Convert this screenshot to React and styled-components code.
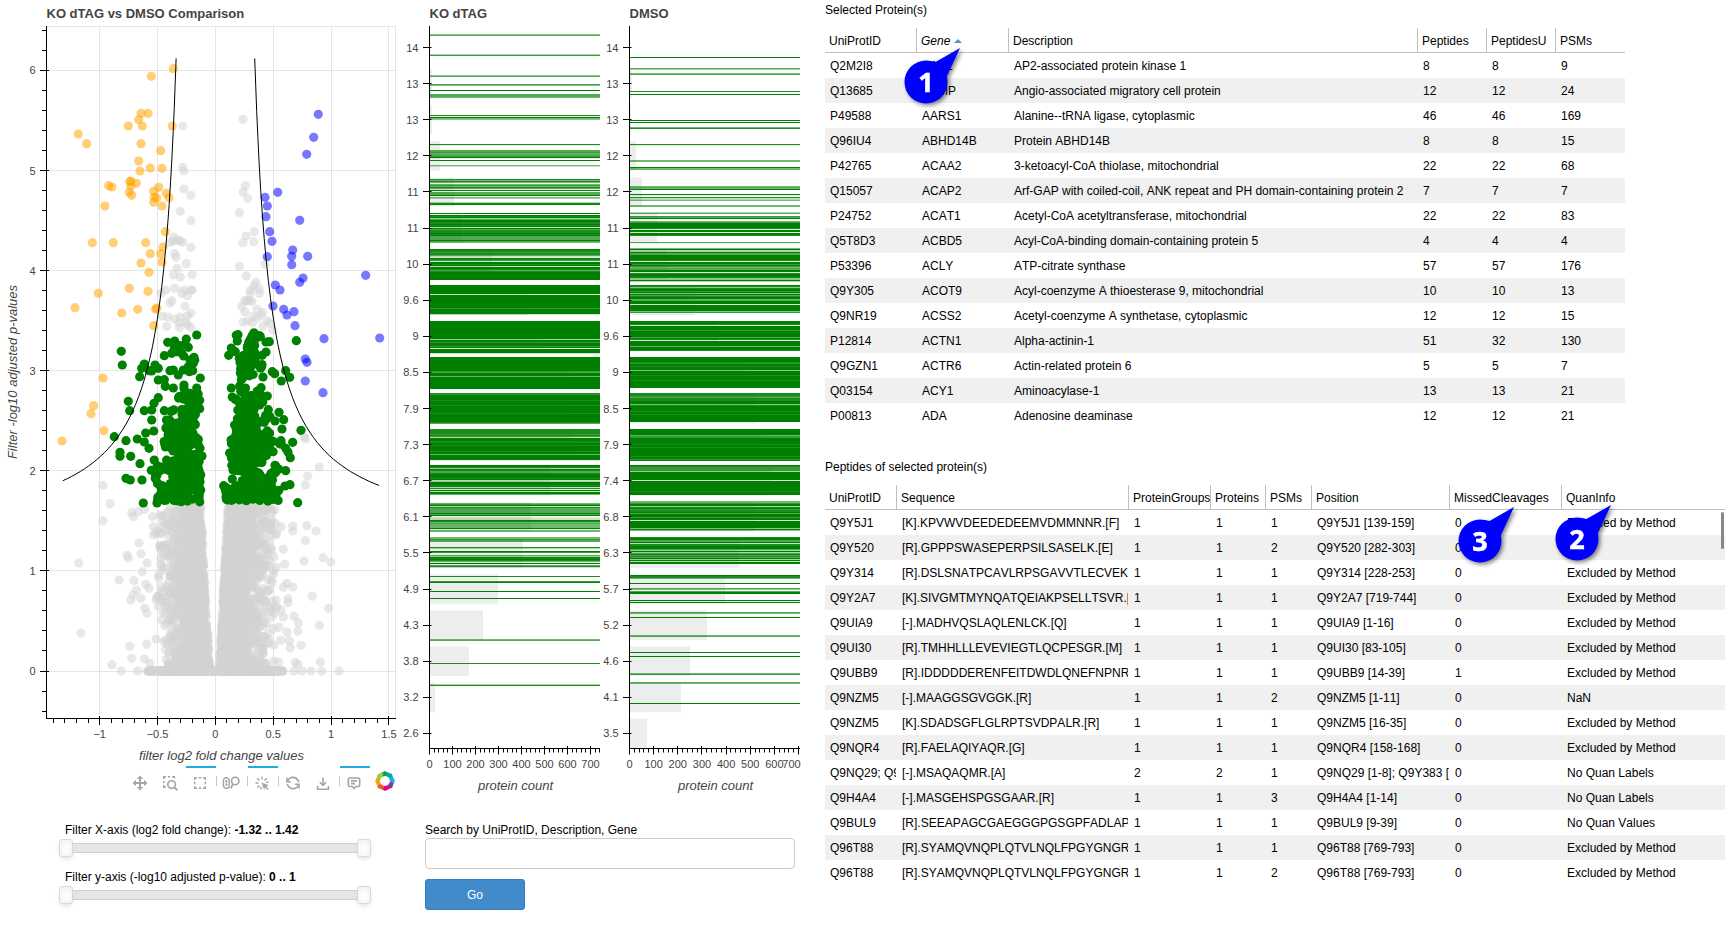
import React from "react";
import styled, { createGlobalStyle, css } from "styled-components";

const GlobalStyle = createGlobalStyle`
  * { box-sizing: border-box; }
  body {
    margin: 0;
    background: #fff;
    color: #000;
    font: 12px "Liberation Sans", Arial, sans-serif;
    overflow: hidden;
  }
`;

/* ---------- layout ---------- */

const Page = styled.main`
  display: flex;
  width: 1728px;
  height: 942px;
`;
const PlotsPane = styled.section`
  width: 825px;
  display: flex;
  flex-direction: column;
`;
const FigureRow = styled.div`
  display: flex;
  height: 812px;
`;
const Figure = styled.div`
  width: ${(p) => p.$w}px;
  display: flex;
  flex-direction: column;
`;
const Plot = styled.svg`
  display: block;
  overflow: visible;
  flex: none;
  font-family: "Liberation Sans", Arial, sans-serif;
  fill: #444;
`;
const PlotTitle = styled.text`
  font-size: 13px;
  font-weight: bold;
`;
const TickLabel = styled.text`
  font-size: 11px;
  text-anchor: ${(p) => p.$anchor || "middle"};
`;
const AxisLabel = styled.text`
  font-size: 13px;
  font-style: italic;
  text-anchor: middle;
`;

/* ---------- toolbar ---------- */

const Toolbar = styled.div`
  display: flex;
  align-items: flex-start;
  padding-left: 126px;
  height: 34px;
`;
const ToolButton = styled.div`
  width: 30px;
  height: 32px;
  flex: none;
  display: flex;
  justify-content: center;
  padding: 7px 2px 0 0;
  border-top: 2px solid ${(p) => (p.$active ? "#26aae1" : "transparent")};
`;
const Separator = styled.div`
  width: 1px;
  height: 10px;
  margin-top: 10px;
  flex: none;
  background: #c4c6c8;
`;
const ToolIcon = styled.svg`
  width: 16px;
  height: 16px;
  fill: none;
  stroke: #a1a6a9;
  stroke-width: 1.4;
  overflow: visible;
`;
const Logo = styled.svg`
  width: 20px;
  height: 20px;
  margin: 5px 0 0 5px;
`;

/* ---------- controls ---------- */

const ControlRow = styled.div`
  display: flex;
  padding-top: 11px;
`;
const SliderColumn = styled.div`
  width: 425px;
  padding-left: 65px;
  display: flex;
  flex-direction: column;
  gap: 15px;
`;
const SliderBox = styled.div`
  height: 32px;
`;
const SliderTitle = styled.div`
  line-height: 15px;
  height: 16px;
`;
const SliderTrack = styled.div`
  display: flex;
  justify-content: space-between;
  align-items: center;
  width: 300px;
  height: 10px;
  margin: 4px 0 0 0;
  background: #e6e6e6;
  border: 1px solid #d0d0d0;
  border-width: 1px 0;
`;
const Handle = styled.div`
  width: 14px;
  height: 18px;
  margin: 0 -6px;
  flex: none;
  background: #fff;
  border: 1px solid #d9d9d9;
  border-radius: 3px;
  box-shadow: inset 0 0 1px #fff, inset 0 1px 7px #ebebeb, 0 3px 6px -3px #bbb;
`;
const SearchColumn = styled.div`
  display: flex;
  flex-direction: column;
`;
const SearchLabel = styled.label`
  line-height: 15px;
  height: 15px;
`;
const SearchInput = styled.input`
  width: 370px;
  height: 31px;
  border: 1px solid #ccc;
  border-radius: 4px;
  outline: none;
`;
const GoButton = styled.button`
  width: 100px;
  height: 31px;
  margin-top: 10px;
  border: 1px solid #357ebd;
  border-radius: 3px;
  background: #428bca;
  color: #fff;
  font: 12px "Liberation Sans", Arial, sans-serif;
`;

/* ---------- tables ---------- */

const TablesPane = styled.section`
  width: 903px;
  position: relative;
`;
const TableBlock = styled.div`
  height: 457px;
`;
const TableTitle = styled.div`
  height: 28px;
  padding-top: 2px;
  line-height: 16px;
`;
const Table = styled.div`
  width: ${(p) => p.$w}px;
  display: flex;
  flex-direction: column;
`;
const rowGrid = css`
  display: grid;
  grid-template-columns: ${(p) => p.$cols.map((c) => c + "px").join(" ")};
`;
const HeaderRow = styled.div`
  ${rowGrid}
  height: 25px;
  border-bottom: 1px solid #c0c0c0;
`;
const HeaderCell = styled.div`
  display: flex;
  align-items: center;
  gap: 4px;
  padding: 2px 0 0 4px;
  line-height: 15px;
  white-space: nowrap;
  overflow: hidden;
  border-right: 1px solid #c0c0c0;
  font-style: ${(p) => (p.$sorted ? "italic" : "normal")};
  &:last-child { border-right: 0; }
`;
const SortArrow = styled.span`
  border: 4px solid transparent;
  border-top: 0;
  border-bottom: 4px solid #6190cd;
`;
const Row = styled.div`
  ${rowGrid}
  height: 25px;
  line-height: 27px;
  background: ${(p) => (p.$odd ? "#f0f0f0" : "#fff")};
`;
const Cell = styled.div`
  height: 25px;
  margin-right: 1px;
  padding-left: 5px;
  white-space: nowrap;
  overflow: hidden;
  font-kerning: none;
`;
const ScrollThumb = styled.div`
  position: absolute;
  left: 896px;
  top: 512px;
  width: 3px;
  height: 37px;
  border-radius: 2px;
  background: #888;
`;
const Callout = styled.svg`
  position: absolute;
  left: ${(p) => p.$x - 24}px;
  top: ${(p) => p.$y - 38}px;
  width: 70px;
  height: 70px;
  overflow: visible;
  filter: drop-shadow(2px 2px 2px rgba(0, 0, 0, 0.5));
  text {
    font: bold 27px "Open Sans", "Noto Sans", sans-serif;
    fill: #fff;
    stroke: #fff;
    stroke-width: 0.5px;
    text-anchor: middle;
  }
`;

/* ---------- volcano plot data ---------- */

const X0 = 215.4, XS = 115.7, Y0 = 671, YS = 100.1;
const sx = (v) => X0 + v * XS;
const sy = (v) => Y0 - v * YS;
const snap = (v) => Math.floor(v) + 0.5;

const randomSource = (seed) => () => {
  seed = (seed + 0x6d2b79f5) | 0;
  let t = Math.imul(seed ^ (seed >>> 15), 1 | seed);
  t = (t + Math.imul(t ^ (t >>> 7), 61 | t)) ^ t;
  return ((t ^ (t >>> 14)) >>> 0) / 4294967296;
};
const rnd = randomSource(42);
const gauss = () => Math.sqrt(-2 * Math.log(rnd() + 1e-9)) * Math.cos(2 * Math.PI * rnd());

// Point lists are stored in thirds of a pixel.
const parse = (s) => s.trim().split(/\s+/).map((p) => p.split(",").map((n) => Number(n) / 3));

const ORANGE = parse(`520,206 454,229 423,340 444,340 416,359 385,378 427,378 517,378 235,402 260,431 423,431
482,452 416,483 451,504 486,505 420,513 390,545 392,543 409,550 326,557 336,561 392,558 476,562 388,577 461,574
499,580 395,586 507,593 463,592 470,594 461,607 486,618 315,618 496,695 277,728 340,728 437,728 489,741 451,761
482,761 486,786 423,789 447,817 388,865 444,874 295,880 225,923 365,939 413,928 470,924 467,928 461,977
309,1134 281,1217 273,1241 312,1292 186,1323`);
const BLUE = parse(`955,343 941,412 920,463 833,577 795,592 802,618 798,650 899,661 809,695 816,724 878,750 802,770
875,769 923,769 875,794 1097,826 909,834 899,847 826,855 840,870 819,918 851,928 882,935 861,945 885,977 972,1016
1139,1014 916,1077 921,1087 916,1143 969,1178`);
const GREEN_FIXED = parse(`364,1054 367,1095 385,1204 389,1232 433,1232 343,1310 378,1322 412,1317 437,1299 461,1293
433,1326 447,1345 360,1357 360,1369 392,1369 420,1391 378,1435 391,1440 426,1440 430,1509 471,1509 454,1411
493,1139 475,1193 493,1232 455,1230 455,1260 462,1210 433,1092 425,1105 419,1130 465,1095 475,1105 455,1113 448,1112
475,1140 889,1022 590,1005 559,1017 524,1023 503,1027 540,1037 523,1043 555,1033 565,1042 493,1067 515,1060 530,1055
545,1060 551,1068 582,1072 584,1081 570,1080 510,1112 520,1110 535,1125 550,1110 565,1100 580,1090 568,1115 578,1112
601,1134 496,1159 520,1164 552,1155 552,1165 590,1164 570,1180 537,1190 555,1190 568,1197 599,1201 599,1226
709,1006 714,1004 712,1023 798,1026 808,1025 694,1044 686,1066 706,1055 718,1075 798,1056 817,1115 824,1121
857,1112 869,1132 844,1143 789,1131 694,1164 697,1191 837,1237 851,1259 846,1287 903,1291 878,1327 843,1322
857,1345 864,1356 871,1373 857,1412 836,1407 870,1454 855,1458 893,1508 805,1229 810,1250 802,1188 825,1263
671,1457 676,1468 685,1480 606,1368 602,1424 602,1470 600,1345 697,1437`);

// Dense areas of the selection: left, right, top, bottom, number of points.
const GREEN_ZONES = [
  [175, 205, 205, 250, 14], [140, 165, 205, 225, 4], [152, 203, 250, 300, 26], [122, 150, 252, 268, 3],
  [105, 150, 285, 310, 8], [110, 195, 315, 360, 36], [87, 112, 345, 370, 6], [190, 206, 330, 370, 8],
  [120, 175, 355, 378, 7], [145, 210, 385, 430, 50], [92, 145, 395, 440, 13], [72, 100, 405, 465, 6],
  [108, 210, 430, 480, 46], [92, 210, 480, 532, 72], [82, 100, 465, 530, 7],
  [350, 395, 23, 40, 8], [348, 375, 40, 100, 16], [330, 400, 90, 122, 15], [330, 370, 122, 165, 13],
  [375, 400, 115, 135, 3], [328, 350, 178, 212, 8], [368, 400, 185, 215, 9], [338, 380, 212, 270, 34],
  [310, 335, 222, 260, 5], [385, 400, 215, 240, 3], [322, 385, 270, 300, 26], [397, 432, 265, 292, 7],
  [298, 318, 300, 400, 13], [315, 385, 300, 345, 40], [397, 423, 312, 330, 4], [315, 400, 345, 402, 62],
  [402, 430, 342, 400, 10], [435, 460, 347, 358, 2], [302, 372, 400, 440, 32], [378, 400, 400, 418, 5],
  [425, 440, 395, 445, 5], [332, 400, 430, 480, 28], [400, 428, 435, 475, 6], [288, 400, 480, 532, 66],
  [400, 450, 482, 532, 20],
];
const GRAY_FIXED = parse(`548,378 729,358 548,502 552,513 552,567 573,586 541,634 573,662 736,557 729,577 743,595
718,638 763,695 739,708 761,725 729,728 521,711 520,723 534,720 511,727 548,727 540,722 573,742 524,761 528,772
559,791 531,805 520,825 576,824 541,831 718,799 795,793 739,828 768,847 762,857 778,867 778,880 752,870 750,880
524,865 497,870 482,880 552,870 573,870 576,870 545,880 562,887 515,902 510,909 555,918 734,902 741,902 748,902
725,919 735,936 756,904 771,927 788,937 783,945 573,939 541,951 562,948 486,948 503,951 524,957 538,968 559,967
500,979 538,983 573,983 729,967 743,963 757,968 771,955 760,948 802,963 809,970 788,979 819,990 562,975
309,1456 330,1511 309,1562 236,1689 243,1899 357,1740 402,1742 381,1666 385,1674 417,1629 423,1661 441,1689
427,1715 410,1771 399,1785 392,1800 423,1795 437,1753 447,1765 434,1824 441,1840 389,1939 395,1975 336,1994
364,2013 413,2013 433,1977 450,1990 395,1538 400,1550 415,1535 434,1528 458,1550 912,1310 916,1317 958,1401
923,1428 916,1455 920,1577 948,1593 916,1622 878,1578 878,1593 843,1580 850,1648 822,1670 854,1692 912,1683
969,1673 993,1686 861,1750 878,1761 850,1762 937,1789 986,1825 864,1796 864,1808 843,1830 882,1849 850,1851
895,1868 837,1882 893,1893 958,1876 861,1896 903,1936 871,1943 868,1922 843,1921 822,1935 885,1987 895,1993
961,1986 836,1986 882,2013 906,2013 933,2013 965,2013 1017,2013 826,1570 815,1560 830,1600 820,1712 813,1740
829,1800 815,1850 440,1933 468,1917 486,1860 490,1840 460,1580 460,1605 480,1640 486,1700 475,1790`);

const grayCloud = () => {
  const pts = [];
  const spreadOf = (s, limit) => {
    const v = Math.abs(gauss()) * s;
    return v > limit ? rnd() * limit : v;
  };
  for (let i = 0; i < 1300; i++) {
    const y = 1.66 * Math.pow(rnd(), 1.25);
    pts.push([sx(-(0.045 + 0.05 * y + spreadOf(0.13 + 0.02 * (1.66 - y), 0.4))), sy(y)]);
  }
  for (let i = 0; i < 1750; i++) {
    const y = 1.66 * Math.pow(rnd(), 1.2);
    pts.push([sx(0.032 + 0.045 * y + spreadOf(0.155, 0.44)), sy(y)]);
  }
  for (let i = 0; i < 420; i++) pts.push([sx((rnd() * 2 - 1) * 0.59), sy(0)]);
  for (let i = 0; i < 55; i++) pts.push([sx(-(0.32 + rnd() * 0.2)), sy(0.6 + rnd())]);
  for (let i = 0; i < 30; i++) pts.push([sx(0.38 + rnd() * 0.16), sy(rnd() * 1.6)]);
  return pts;
};
const greenCloud = () =>
  GREEN_ZONES.flatMap(([x0, x1, y0, y1, n]) =>
    Array.from({ length: n }, () => [
      130 + (x0 + rnd() * (x1 - x0)) / 3,
      325 + (y0 + rnd() * (y1 - y0)) / 3,
    ])
  );
const GRAY = [...GRAY_FIXED, ...grayCloud()];
const GREEN = [...GREEN_FIXED, ...greenCloud()];

const curve = (dir, end) => {
  const pts = [];
  for (let i = 0; i <= 40; i++) {
    const x = 0.34 + (end - 0.34) * Math.pow(i / 40, 1.6);
    pts.push(`${sx(dir * x).toFixed(1)},${sy(1.31 + 0.659 / (x - 0.203)).toFixed(1)}`);
  }
  return pts.join(" ");
};

const Dots = ({ points, color, opacity = 1 }) => (
  <g fill={color} fillOpacity={opacity}>
    {points.map(([x, y], i) => <circle key={i} cx={x.toFixed(1)} cy={y.toFixed(1)} r="4.6" />)}
  </g>
);

const range = (a, b) => Array.from({ length: b - a + 1 }, (_, i) => a + i);

function VolcanoPlot() {
  const xMajor = [-1, -0.5, 0, 0.5, 1, 1.5];
  const yMajor = range(0, 6);
  return (
    <Plot width="400" height="766">
      <PlotTitle x="46.5" y="18">KO dTAG vs DMSO Comparison</PlotTitle>
      <g stroke="#e5e5e5" fill="none">
        {xMajor.map((v) => <path key={v} d={`M${snap(sx(v))} 26.5V718.5`} />)}
        {yMajor.map((v) => <path key={v} d={`M46.5 ${snap(sy(v))}H395.5`} />)}
        <rect x="46.5" y="26.5" width="349" height="692" />
      </g>
      <g stroke="#000">
        <path d="M46.5 26V719M46 718.5H396" />
        {range(-14, 15).map((v) => <path key={v} d={`M${snap(sx(v / 10))} 718v5`} />)}
        {range(-2, 32).map((v) => <path key={v} d={`M42 ${snap(sy(v / 5))}h4`} />)}
        {xMajor.map((v) => <path key={v} d={`M${snap(sx(v))} 716v9`} />)}
        {yMajor.map((v) => <path key={v} d={`M40 ${snap(sy(v))}h9`} />)}
      </g>
      <Dots points={GRAY} color="#d3d3d3" opacity={0.52} />
      <Dots points={GREEN} color="#008000" />
      <Dots points={ORANGE} color="#ffa500" opacity={0.54} />
      <Dots points={BLUE} color="#0000ff" opacity={0.53} />
      <polyline points={curve(-1, 1.32)} fill="none" stroke="#000" />
      <polyline points={curve(1, 1.415)} fill="none" stroke="#000" />
      {xMajor.map((v) => (
        <TickLabel key={v} x={sx(v)} y="738">{String(v).replace("-", "−")}</TickLabel>
      ))}
      {yMajor.map((v) => <TickLabel key={v} $anchor="end" x="35.5" y={sy(v) + 4}>{v}</TickLabel>)}
      <AxisLabel x="221.5" y="760">filter log2 fold change values</AxisLabel>
      <AxisLabel transform="translate(17 372) rotate(-90)">Filter -log10 adjusted p-values</AxisLabel>
    </Plot>
  );
}

/* ---------- histogram data ---------- */

// Each token is "row:opacities", one digit per pixel row (9 is opaque, 0 is empty).
const KO_LINES = `34:46 54:37 75:46 84:74 90:9 94:6665 115:81954 144:81 150:667566791 160:9 165:52
179:8585 184:5758619 192:6669 197:53 202:389 213:909893699889892968889896666965 249:988788620
257:19871998929986899999999 285:999999999199999999999997999992 321:999999999999999999399799979199992
357:99999999999999769995999999999999 393:8799999899998999999989999999986 429:888887872999889989999989959999910
465:998398668999989239998928192995 503:579286666696901222 520:985655559155 537:557660 547:83 551:97
555:63989851 563:90682 576:8 581:79 591:9 598:9 639:56 663:8 684:38`;
const DMSO_LINES = `57:9 68:63 73:56 91:8 94:9 120:902 122:9 127:58 144:81 160:55 167:955 186:5659 194:91 197:82
199:35 205:55 212:36 216:769 221:5799999819919980 242:61 248:5933966999998199797566991899984493
285:984899794968995699919999994700 321:999819999799999969819999959998 357:9999987998999499998999989999999
393:88876888999489999989989999999 429:99999957799999989989999999989979 465:987777399999999199999999998999
501:5579938978896999799199999994940 537:899669288999639369686939299 575:9885 583:9 588:64 591:699 600:91 602:9
612:65 617:9 635:56 652:9 656:9 673:57 682:65 703:9`;
const parseRows = (s) =>
  s.trim().split(/\s+/).flatMap((t) => {
    const [y, a] = t.split(":");
    return [...a].map((d, i) => [Number(y) + i, Number(d) / 9]);
  });

const HISTOGRAMS = {
  ko: {
    title: "KO dTAG",
    labels: "14 13 13 12 11 11 10 9.6 9 8.5 7.9 7.3 6.7 6.1 5.5 4.9 4.3 3.8 3.2 2.6".split(" "),
    bars: [0, 2, 2, 10, 24, 32, 62, 98, 113, 140, 137, 142, 120, 101, 93, 68, 53, 39, 5, 0],
    rows: parseRows(KO_LINES),
    step: 23,
    labelShift: 0,
  },
  dmso: {
    title: "DMSO",
    labels: "14 13 13 12 12 11 11 10 9.6 9 8.5 7.9 7.4 6.8 6.3 5.7 5.2 4.6 4.1 3.5".split(" "),
    bars: [0, 2, 1, 6, 12, 27, 37, 65, 88, 118, 125, 136, 142, 125, 109, 95, 77, 60, 51, 17],
    rows: parseRows(DMSO_LINES),
    step: 24.15,
    labelShift: -7,
  },
};

function Histogram({ width, title, labels, bars, rows, step, labelShift }) {
  const binY = (i) => 47.5 + i * 36.1;
  return (
    <Plot width={width} height="812">
      <PlotTitle x="29.5" y="18">{title}</PlotTitle>
      <g fill="#d3d3d3" fillOpacity="0.4">
        {bars.map((w, i) => w > 0 && (
          <rect key={i} x="30" y={binY(i) - 14.6} width={w} height={i === 19 ? 29 : 29.4} />
        ))}
      </g>
      <g fill="#008000" shapeRendering="crispEdges">
        {rows.map(([y, a], i) => a > 0 && <rect key={i} x="30" y={y} width="170" height="1" opacity={a} />)}
      </g>
      <g stroke="#000">
        <path d="M29.5 26V749M29 748.5H200" />
        {labels.map((_, i) => <path key={i} d={`M23 ${snap(binY(i))}h8.5`} />)}
        {range(0, 37).map((k) => {
          const x = snap(29.5 + (k * step) / 5);
          if (x > 200) return null;
          return <path key={k} d={k % 5 ? `M${x} 748v4.5` : `M${x} 746v8.5`} />;
        })}
      </g>
      {labels.map((t, i) => <TickLabel key={i} $anchor="end" x="18.5" y={binY(i) + 4}>{t}</TickLabel>)}
      {range(0, 7).map((k) => (
        <TickLabel key={k} x={29.5 + k * step + (k === 7 ? labelShift : 0)} y="768">{k * 100}</TickLabel>
      ))}
      <AxisLabel x="115.5" y="790">protein count</AxisLabel>
    </Plot>
  );
}

/* ---------- toolbar icons ---------- */

const PanIcon = () => (
  <ToolIcon viewBox="0 0 16 16">
    <path d="M8 2v12M2 8h12" strokeWidth="1.8" />
    <path d="M8 .6l3.2 3.4H4.8zM8 15.4l3.2-3.4H4.8zM.6 8L4 4.8v6.4zM15.4 8L12 4.8v6.4z" fill="#a1a6a9" stroke="none" />
  </ToolIcon>
);
const BoxZoomIcon = () => (
  <ToolIcon viewBox="0 0 16 16">
    <path d="M1.7 4V1.7H4M6 1.7h2M10 1.7h2.3V3.5M1.7 6v2M1.7 10v2.3H4" strokeWidth="1.6" />
    <circle cx="9.6" cy="9.6" r="3.8" strokeWidth="1.6" />
    <path d="M12.4 12.4l3 3" strokeWidth="1.8" />
  </ToolIcon>
);
const BoxSelectIcon = () => (
  <ToolIcon viewBox="0 0 16 16">
    <path d="M2.7 5V2.7H5M6.8 2.7h2.4M11 2.7h2.3V5M13.3 6.8v2.4M13.3 11v2.3H11M9.2 13.3H6.8M5 13.3H2.7V11M2.7 9.2V6.8" />
  </ToolIcon>
);
const WheelZoomIcon = () => (
  <ToolIcon viewBox="0 0 16 16">
    <rect x=".4" y="2.7" width="5.8" height="10.6" rx="2.9" />
    <path d="M3.3 5v6M1.9 6.6l1.4-1.2 1.4 1.2M1.9 9.4l1.4 1.2 1.4-1.2" strokeWidth="1" />
    <circle cx="12.2" cy="6" r="3.7" strokeWidth="1.6" />
    <path d="M10 8.8l-2.2 4.6" strokeWidth="1.8" />
  </ToolIcon>
);
const TapIcon = () => (
  <ToolIcon viewBox="0 0 16 16">
    <path d="M8 1.5v3M1.5 8h3M3.2 3.2l2.3 2.3M12.8 3.2l-2.3 2.3M3.2 12.8l2.3-2.3M12 7.4h2.6M7 11.8v2.6" />
    <path d="M7.6 7.6l7 2.6-2.4 1.3 2.4 2.6-1 1-2.5-2.5-1 2.3z" fill="#a1a6a9" stroke="none" />
  </ToolIcon>
);
const ResetIcon = () => (
  <ToolIcon viewBox="0 0 16 16">
    <path d="M2.4 6.5A5.8 5.8 0 0 1 13 5.3l1 1.5M13.6 9.5A5.8 5.8 0 0 1 3 10.7l-1-1.5" strokeWidth="1.6" />
    <path d="M1.9 2.5v4.2h4M14.1 13.5V9.3h-4" strokeWidth="1.5" />
  </ToolIcon>
);
const SaveIcon = () => (
  <ToolIcon viewBox="0 0 16 16">
    <path d="M8 2.5v7.7M4.8 7.2L8 10.4l3.2-3.2M2.6 11v3.3h10.8V11" strokeWidth="1.6" />
  </ToolIcon>
);
const HoverIcon = () => (
  <ToolIcon viewBox="0 0 16 16">
    <path d="M3.8 3h8.4a1.5 1.5 0 0 1 1.5 1.5V10a1.5 1.5 0 0 1-1.5 1.5H10L8 13.3l-2-1.8H3.8A1.5 1.5 0 0 1 2.3 10V4.5A1.5 1.5 0 0 1 3.8 3zM5 5.9h6M5 8.6h4" strokeWidth="1.6" />
  </ToolIcon>
);
const LOGO_COLORS = ["#12a14b", "#06a8a6", "#26aae1", "#7c3f98", "#ec008c", "#f15a29", "#f9a01b", "#9ccb3b"];
const BokehLogo = () => (
  <Logo viewBox="-10 -10 20 20">
    {LOGO_COLORS.map((c, i) => (
      <path key={c} d="M-4.6 -7.8L0 -10L4.7 -7L2.2 -5.3L-3.2 -4.2z" fill={c} transform={`rotate(${i * 45})`} />
    ))}
  </Logo>
);

const ToolStrip = () => (
  <Toolbar>
    <ToolButton><PanIcon /></ToolButton>
    <ToolButton><BoxZoomIcon /></ToolButton>
    <ToolButton $active><BoxSelectIcon /></ToolButton>
    <Separator />
    <ToolButton><WheelZoomIcon /></ToolButton>
    <Separator />
    <ToolButton $active><TapIcon /></ToolButton>
    <Separator />
    <ToolButton><ResetIcon /></ToolButton>
    <ToolButton><SaveIcon /></ToolButton>
    <Separator />
    <ToolButton $active><HoverIcon /></ToolButton>
    <BokehLogo />
  </Toolbar>
);

const Slider = ({ label, value }) => (
  <SliderBox>
    <SliderTitle>{label} <b>{value}</b></SliderTitle>
    <SliderTrack><Handle /><Handle /></SliderTrack>
  </SliderBox>
);

/* ---------- table data ---------- */

const PROTEIN_COLS = [92, 92, 409, 69, 69, 69];
const PROTEIN_HEAD = ["UniProtID", "Gene", "Description", "Peptides", "PeptidesU", "PSMs"];
const PROTEINS = `Q2M2I8|AAK1|AP2-associated protein kinase 1|8|8|9
Q13685|AAMP|Angio-associated migratory cell protein|12|12|24
P49588|AARS1|Alanine--tRNA ligase, cytoplasmic|46|46|169
Q96IU4|ABHD14B|Protein ABHD14B|8|8|15
P42765|ACAA2|3-ketoacyl-CoA thiolase, mitochondrial|22|22|68
Q15057|ACAP2|Arf-GAP with coiled-coil, ANK repeat and PH domain-containing protein 2|7|7|7
P24752|ACAT1|Acetyl-CoA acetyltransferase, mitochondrial|22|22|83
Q5T8D3|ACBD5|Acyl-CoA-binding domain-containing protein 5|4|4|4
P53396|ACLY|ATP-citrate synthase|57|57|176
Q9Y305|ACOT9|Acyl-coenzyme A thioesterase 9, mitochondrial|10|10|13
Q9NR19|ACSS2|Acetyl-coenzyme A synthetase, cytoplasmic|12|12|15
P12814|ACTN1|Alpha-actinin-1|51|32|130
Q9GZN1|ACTR6|Actin-related protein 6|5|5|7
Q03154|ACY1|Aminoacylase-1|13|13|21
P00813|ADA|Adenosine deaminase|12|12|21`.split("\n").map((r) => r.split("|"));

const PEPTIDE_COLS = [72, 232, 82, 55, 46, 138, 112, 163];
const PEPTIDE_HEAD = ["UniProtID", "Sequence", "ProteinGroups", "Proteins", "PSMs", "Position", "MissedCleavages", "QuanInfo"];
const PEPTIDES = `Q9Y5J1|[K].KPVWVDEEDEDEEMVDMMNNR.[F]|1|1|1|Q9Y5J1 [139-159]|0|Excluded by Method
Q9Y520|[R].GPPPSWASEPERPSILSASELK.[E]|1|1|2|Q9Y520 [282-303]|0|
Q9Y314|[R].DSLSNATPCAVLRPSGAVVTLECVEK|1|1|1|Q9Y314 [228-253]|0|Excluded by Method
Q9Y2A7|[K].SIVGMTMYNQATQEIAKPSELLTSVR.[|1|1|1|Q9Y2A7 [719-744]|0|Excluded by Method
Q9UIA9|[-].MADHVQSLAQLENLCK.[Q]|1|1|1|Q9UIA9 [1-16]|0|Excluded by Method
Q9UI30|[R].TMHHLLLEVEVIEGTLQCPESGR.[M]|1|1|1|Q9UI30 [83-105]|0|Excluded by Method
Q9UBB9|[R].IDDDDDERENFEITDWDLQNEFNPNR|1|1|1|Q9UBB9 [14-39]|1|Excluded by Method
Q9NZM5|[-].MAAGGSGVGGK.[R]|1|1|2|Q9NZM5 [1-11]|0|NaN
Q9NZM5|[K].SDADSGFLGLRPTSVDPALR.[R]|1|1|1|Q9NZM5 [16-35]|0|Excluded by Method
Q9NQR4|[R].FAELAQIYAQR.[G]|1|1|1|Q9NQR4 [158-168]|0|Excluded by Method
Q9NQ29; Q9|[-].MSAQAQMR.[A]|2|2|1|Q9NQ29 [1-8]; Q9Y383 [|0|No Quan Labels
Q9H4A4|[-].MASGEHSPGSGAAR.[R]|1|1|3|Q9H4A4 [1-14]|0|No Quan Labels
Q9BUL9|[R].SEEAPAGCGAEGGGPGSGPFADLAP|1|1|1|Q9BUL9 [9-39]|0|No Quan Values
Q96T88|[R].SYAMQVNQPLQTVLNQLFPGYGNGR|1|1|1|Q96T88 [769-793]|0|Excluded by Method
Q96T88|[R].SYAMQVNQPLQTVLNQLFPGYGNGR|1|1|2|Q96T88 [769-793]|0|Excluded by Method`.split("\n").map((r) => r.split("|"));

const DataTable = ({ cols, head, rows, sorted }) => (
  <Table $w={cols.reduce((a, b) => a + b, 0)}>
    <HeaderRow $cols={cols}>
      {head.map((h) => (
        <HeaderCell key={h} $sorted={h === sorted}>{h}{h === sorted && <SortArrow />}</HeaderCell>
      ))}
    </HeaderRow>
    {rows.map((r, i) => (
      <Row key={i} $cols={cols} $odd={i % 2 === 1}>
        {r.map((c, j) => <Cell key={j}>{c}</Cell>)}
      </Row>
    ))}
  </Table>
);

const NumberedCallout = ({ x, y, n }) => (
  <Callout $x={x} $y={y} viewBox="-24 -38 70 70">
    <circle r="21.5" fill="#00f" />
    <path d="M4 -21L9.5 -20L34 -34L21 -6L20 6L0 0z" fill="#00f" />
    <text x="0" y="9.8">{n}</text>
  </Callout>
);

export default function App() {
  return (
    <>
      <GlobalStyle />
      <Page>
        <PlotsPane>
          <FigureRow>
            <Figure $w={400}>
              <VolcanoPlot />
              <ToolStrip />
            </Figure>
            <Figure $w={200}><Histogram width="200" {...HISTOGRAMS.ko} /></Figure>
            <Figure $w={225}><Histogram width="210" {...HISTOGRAMS.dmso} /></Figure>
          </FigureRow>
          <ControlRow>
            <SliderColumn>
              <Slider label="Filter X-axis (log2 fold change):" value="-1.32 .. 1.42" />
              <Slider label="Filter y-axis (-log10 adjusted p-value):" value="0 .. 1" />
            </SliderColumn>
            <SearchColumn>
              <SearchLabel>Search by UniProtID, Description, Gene</SearchLabel>
              <SearchInput />
              <GoButton>Go</GoButton>
            </SearchColumn>
          </ControlRow>
        </PlotsPane>
        <TablesPane>
          <TableBlock>
            <TableTitle>Selected Protein(s)</TableTitle>
            <DataTable cols={PROTEIN_COLS} head={PROTEIN_HEAD} rows={PROTEINS} sorted="Gene" />
          </TableBlock>
          <TableBlock>
            <TableTitle>Peptides of selected protein(s)</TableTitle>
            <DataTable cols={PEPTIDE_COLS} head={PEPTIDE_HEAD} rows={PEPTIDES} />
          </TableBlock>
          <ScrollThumb />
          <NumberedCallout x={100.5} y={82} n="1" />
          <NumberedCallout x={654.5} y={540.5} n="3" />
          <NumberedCallout x={751.5} y={538.5} n="2" />
        </TablesPane>
      </Page>
    </>
  );
}
